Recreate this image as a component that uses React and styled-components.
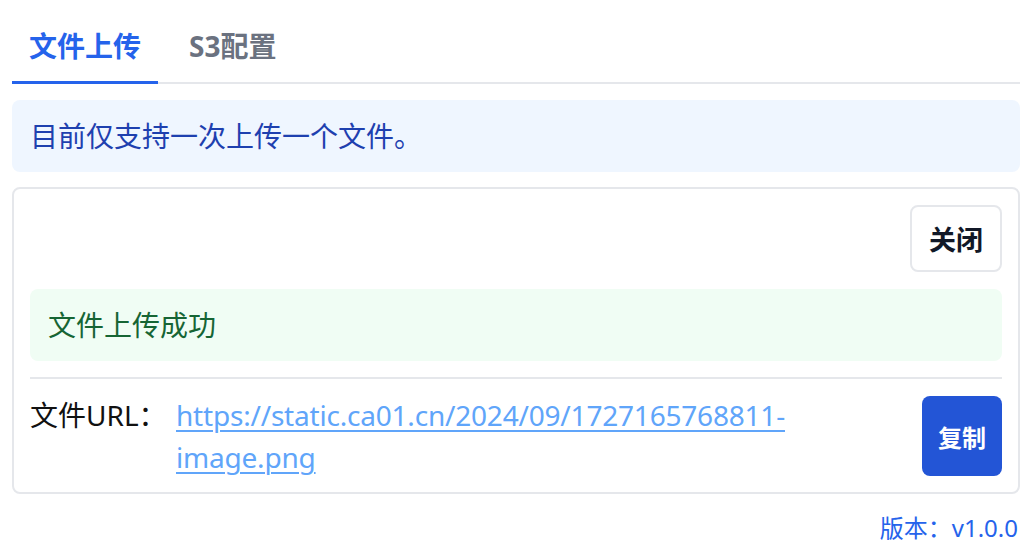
import styled, { createGlobalStyle } from "styled-components";

const GlobalStyle = createGlobalStyle`
    html, body {
        margin: 0;
        padding: 0;
        background: #ffffff;
    }
    body {
        font-family: "Noto Sans", "Noto Sans CJK SC", sans-serif;
        color: #111827;
    }
`;

const Page = styled.div`
    padding: 8px 14px 0 12px;
`;

const TabBar = styled.div`
    display: flex;
    border-bottom: 2px solid #e5e7eb;
`;

const Tab = styled.div`
    padding: 17px 17px 14px;
    font-size: 28px;
    line-height: 42px;
    font-weight: 700;
    color: ${(p) => (p.active ? "#2563eb" : "#6b7280")};
    border-bottom: 3px solid ${(p) => (p.active ? "#2563eb" : "transparent")};
    margin-bottom: -2px;
    margin-right: ${(p) => (p.active ? "14px" : "0")};
`;

const Alert = styled.div`
    background: ${(p) => p.bg};
    color: ${(p) => p.color};
    border-radius: 8px;
    padding: 15px 18px;
    font-size: 28px;
    line-height: 42px;
`;

const InfoAlert = styled(Alert)`
    margin-top: 16px;
`;

const Card = styled.div`
    margin-top: 15px;
    border: 2px solid #e5e7eb;
    border-radius: 8px;
    padding: 16px 16px 14px;
    display: flex;
    flex-direction: column;
`;

const Toolbar = styled.div`
    display: flex;
    justify-content: flex-end;
    margin-bottom: 17px;
`;

const CloseButton = styled.button`
    width: 92px;
    height: 67px;
    border: 2px solid #e5e7eb;
    border-radius: 8px;
    background: #ffffff;
    font-family: inherit;
    font-size: 27px;
    font-weight: 700;
    color: #111827;
    padding: 0;
`;

const Divider = styled.div`
    height: 2px;
    background: #e5e7eb;
    margin: 16px 0 15px;
`;

const UrlRow = styled.div`
    display: flex;
    align-items: center;
`;

const Label = styled.span`
    align-self: flex-start;
    font-size: 28px;
    line-height: 42px;
    color: #111111;
    width: 146px;
    flex-shrink: 0;
`;

const LinkWrap = styled.div`
    flex: 1;
    margin-right: 24px;
`;

const Link = styled.a`
    font-size: 28px;
    line-height: 42px;
    letter-spacing: -0.2px;
    color: #60a5fa;
    text-decoration: underline;
    text-underline-offset: 4px;
    text-decoration-thickness: 2px;
    word-break: break-word;
`;

const CopyButton = styled.button`
    width: 80px;
    height: 80px;
    flex-shrink: 0;
    border: none;
    border-radius: 8px;
    background: #2355d6;
    color: #ffffff;
    font-family: inherit;
    font-size: 24px;
    font-weight: 700;
    padding: 0;
`;

const Version = styled.div`
    margin-top: 16px;
    text-align: right;
    padding-right: 2px;
    font-size: 24px;
    line-height: 36px;
    color: #2563eb;
`;

function App() {
    const url = "https://static.ca01.cn/2024/09/1727165768811-image.png";
    return (
        <Page>
            <GlobalStyle />
            <TabBar>
                <Tab active>文件上传</Tab>
                <Tab>S3配置</Tab>
            </TabBar>
            <InfoAlert bg="#eff6ff" color="#1e40af">目前仅支持一次上传一个文件。</InfoAlert>
            <Card>
                <Toolbar>
                    <CloseButton>关闭</CloseButton>
                </Toolbar>
                <Alert bg="#f0fdf4" color="#166534">文件上传成功</Alert>
                <Divider />
                <UrlRow>
                    <Label>文件URL：</Label>
                    <LinkWrap>
                        <Link href="#">{url}</Link>
                    </LinkWrap>
                    <CopyButton>复制</CopyButton>
                </UrlRow>
            </Card>
            <Version>版本：v1.0.0</Version>
        </Page>
    );
}

export default App;
